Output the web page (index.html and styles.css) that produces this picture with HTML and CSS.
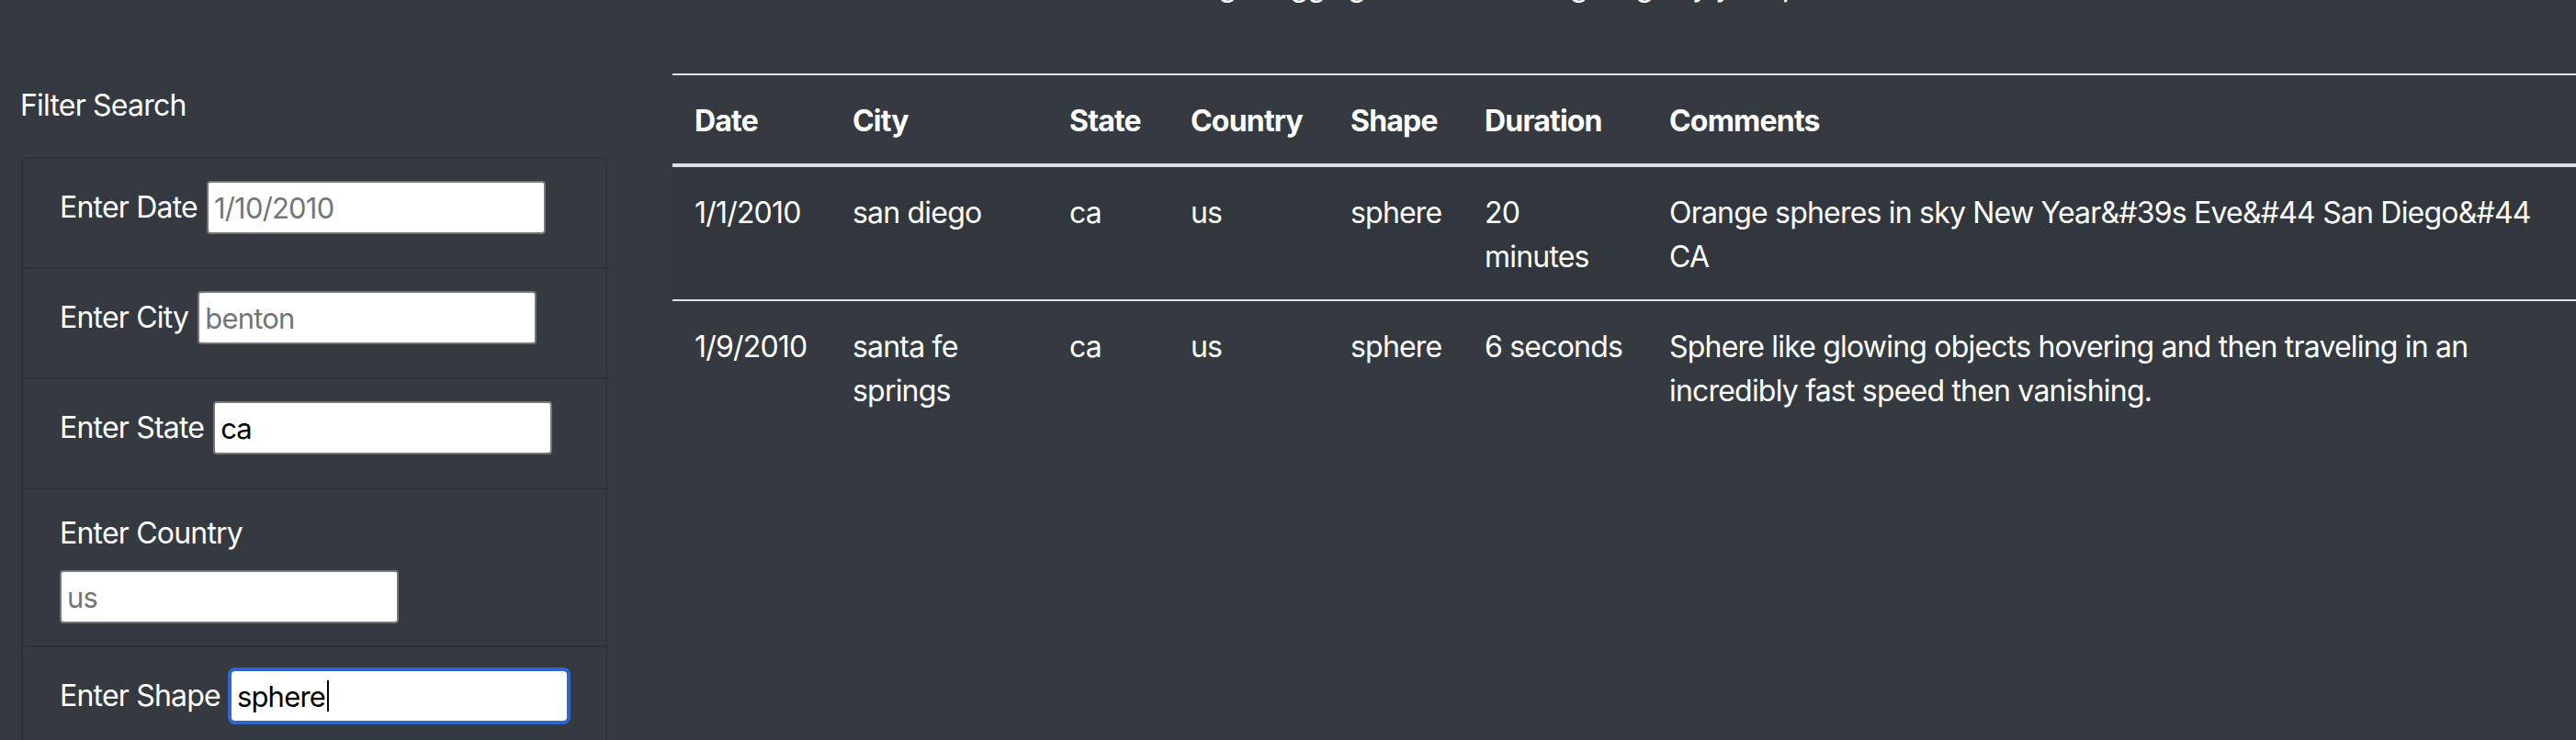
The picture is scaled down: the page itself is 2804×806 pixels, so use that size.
FILE: index.html
```html
<!DOCTYPE html>
<html lang="en">
<head>
<meta charset="utf-8">
<title>UFO Sightings</title>
<link rel="stylesheet" href="styles.css">
</head>
<body>
<div class="page">
  <aside class="sidebar">
    <h5 class="filter-title">Filter Search</h5>
    <form class="card">
      <ul class="filters">
        <li class="filter filter-inline">
          <label for="datetime">Enter Date</label>
          <input id="datetime" class="field" type="text" placeholder="1/10/2010">
        </li>
        <li class="filter filter-inline">
          <label for="city">Enter City</label>
          <input id="city" class="field" type="text" placeholder="benton">
        </li>
        <li class="filter filter-inline">
          <label for="state">Enter State</label>
          <input id="state" class="field" type="text" placeholder="ca" value="ca">
        </li>
        <li class="filter filter-stacked">
          <label for="country">Enter Country</label>
          <input id="country" class="field" type="text" placeholder="us">
        </li>
        <li class="filter filter-inline">
          <label for="shape">Enter Shape</label>
          <span class="field-wrap">
            <input id="shape" class="field field-focus" type="text" placeholder="circle" value="sphere">
            <span class="caret"></span>
          </span>
        </li>
      </ul>
    </form>
  </aside>
  <main class="content">
    <p class="intro">Begin digging into all of the sightings by your preferred filter below.</p>
    <table class="table">
      <colgroup>
        <col class="col-date">
        <col class="col-city">
        <col class="col-state">
        <col class="col-country">
        <col class="col-shape">
        <col class="col-duration">
        <col class="col-comments">
      </colgroup>
      <thead>
        <tr>
          <th>Date</th>
          <th>City</th>
          <th>State</th>
          <th>Country</th>
          <th>Shape</th>
          <th>Duration</th>
          <th>Comments</th>
        </tr>
      </thead>
      <tbody>
        <tr>
          <td>1/1/2010</td>
          <td>san diego</td>
          <td>ca</td>
          <td>us</td>
          <td>sphere</td>
          <td>20 minutes</td>
          <td>Orange spheres in sky New Year&amp;#39s Eve&amp;#44 San Diego&amp;#44 CA</td>
        </tr>
        <tr>
          <td>1/9/2010</td>
          <td>santa fe springs</td>
          <td>ca</td>
          <td>us</td>
          <td>sphere</td>
          <td>6 seconds</td>
          <td>Sphere like glowing objects hovering and then traveling in an incredibly fast speed then vanishing.</td>
        </tr>
      </tbody>
    </table>
  </main>
</div>
</body>
</html>
```

FILE: styles.css
```css
html, body {
  margin: 0;
  padding: 0;
}

body {
  background: #343a40;
  color: #ffffff;
  font-family: Inter, "Noto Sans", sans-serif;
  font-size: 32px;
  line-height: 48px;
  letter-spacing: -0.025em;
  height: 806px;
  overflow: hidden;
}

.page {
  display: flex;
  align-items: flex-start;
}

.sidebar {
  box-sizing: border-box;
  width: 661px;
  flex: none;
  padding: 91px 0 0 22px;
}

.filter-title {
  margin: 0 0 32px;
  font-size: 32px;
  font-weight: 400;
  line-height: 48px;
}

.card {
  margin: 0 0 0 1px;
  border: 2px solid rgba(0, 0, 0, 0.125);
  border-radius: 8px;
}

.filters {
  list-style: none;
  margin: 0;
  padding: 0;
}

.filter {
  padding: 24px 40px 36px;
  border-top: 2px solid rgba(0, 0, 0, 0.125);
}

.filter:first-child {
  border-top: 0;
}

.filter label {
  white-space: nowrap;
}

.filter-inline {
  display: flex;
  align-items: center;
  gap: 10px;
}

.filter-stacked {
  display: flex;
  flex-direction: column;
  align-items: flex-start;
  padding-bottom: 24px;
}

.filter-stacked .field {
  margin-top: 16px;
}

.field {
  box-sizing: border-box;
  width: 369px;
  height: 58px;
  margin: 0;
  padding: 0 6px;
  border: 2px solid #767676;
  border-radius: 4px;
  background: #ffffff;
  color: #000000;
  font-family: inherit;
  font-size: 31px;
  letter-spacing: inherit;
  outline: none;
}

.field::placeholder {
  color: #757575;
  opacity: 1;
}

.field-wrap {
  position: relative;
  display: inline-block;
  height: 58px;
}

.field-focus {
  border-color: #2f66cf;
  border-radius: 6px;
  box-shadow: 0 0 0 2px #2f66cf;
}

.caret {
  position: absolute;
  left: 106px;
  top: 12px;
  width: 2px;
  height: 34px;
  background: #000000;
}

.content {
  flex: 1;
  margin-left: 71px;
  min-width: 0;
}

.intro {
  margin: -39px 0 71px;
  text-align: center;
  white-space: nowrap;
}

.table {
  width: 100%;
  border-collapse: collapse;
  table-layout: fixed;
  color: #ffffff;
}

.col-date { width: 172px; }
.col-city { width: 236px; }
.col-state { width: 132px; }
.col-country { width: 174px; }
.col-shape { width: 146px; }
.col-duration { width: 201px; }

.table th,
.table td {
  padding: 26px 24px 22px;
  text-align: left;
  vertical-align: top;
  border-top: 2px solid #dee2e6;
}

.table thead th {
  font-weight: 700;
  border-bottom: 4px solid #dee2e6;
}

.table tbody tr:first-child td {
  border-top: 0;
}

.table tbody tr:nth-child(odd) {
  background: rgba(0, 0, 0, 0.05);
}
```
